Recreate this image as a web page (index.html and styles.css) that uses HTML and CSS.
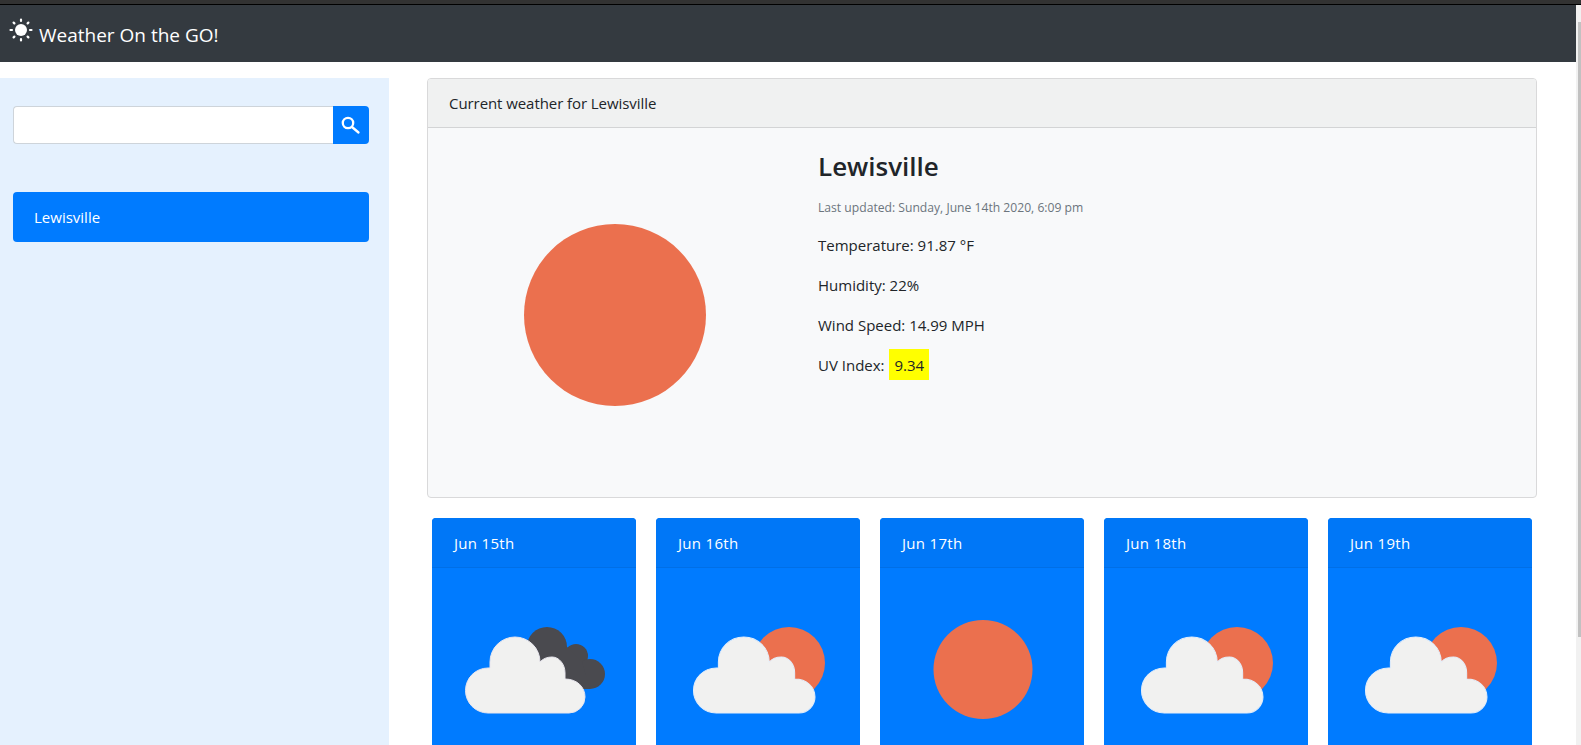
FILE: index.html
```html
<!DOCTYPE html>
<html lang="en">
<head>
<meta charset="utf-8">
<title>Weather On the GO!</title>
<link rel="stylesheet" href="styles.css">
</head>
<body>
<svg class="defs" width="0" height="0" aria-hidden="true">
  <defs>
    <path id="cloud" d="M56 146A22.500 22.500 0 0 1 56 101L58 101L58 95A25 25 0 0 1 108 95C111 91.500 115.500 90 120 90C127 90 133 97 133 106L133 112C145 112 153 120 153 130A16 16 0 0 1 137 146Z"/>
  </defs>
</svg>
<div class="app">
  <div class="strip"></div>
  <div class="window">
    <div class="page">
      <nav class="navbar">
        <svg class="brand-icon" viewBox="0 0 24 24" width="24" height="24">
          <circle cx="12" cy="12" r="6" fill="#fff"/>
          <g stroke="#fff" stroke-width="2.200" stroke-linecap="round">
            <path d="M12 1.500V3M12 21V22.500M1.500 12H3M21 12H22.500M4.600 4.600L5.400 5.400M18.600 18.600L19.400 19.400M4.600 19.400L5.400 18.600M18.600 5.400L19.400 4.600"/>
          </g>
        </svg>
        <span class="brand-text">Weather On the GO!</span>
      </nav>
      <div class="layout">
        <aside class="sidebar">
          <form class="search">
            <input class="search-input" type="text" aria-label="City">
            <button class="search-btn" type="button" aria-label="Search">
              <svg viewBox="0 0 20 20" width="20" height="20" fill="none" stroke="#fff" stroke-width="2.300">
                <circle cx="7" cy="8" r="5.200"/>
                <path d="M11 12L17.500 17.500" stroke-linecap="round"/>
              </svg>
            </button>
          </form>
          <div class="city">Lewisville</div>
        </aside>
        <main class="content">
          <section class="current">
            <header class="current-head">Current weather for Lewisville</header>
            <div class="current-body">
              <div class="current-image">
                <svg class="big-sun" viewBox="0 0 184 184" width="184" height="184">
                  <circle cx="92" cy="92" r="91" fill="#eb704e"/>
                </svg>
              </div>
              <div class="current-info">
                <h3 class="city-name">Lewisville</h3>
                <p class="updated">Last updated: Sunday, June 14th 2020, 6:09 pm</p>
                <p class="stat">Temperature: 91.87 °F</p>
                <p class="stat">Humidity: 22%</p>
                <p class="stat">Wind Speed: 14.99 MPH</p>
                <p class="stat">UV Index: <span class="uv">9.34</span></p>
              </div>
            </div>
          </section>
          <section class="forecast">
            <article class="day">
              <header class="day-head">Jun 15th</header>
              <svg class="day-icon" viewBox="0 1 204 178" width="204" height="178">
                <g fill="#4a4a4f">
                  <circle cx="115" cy="80" r="20"/>
                  <circle cx="144" cy="89" r="12"/>
                  <circle cx="158" cy="107" r="15"/>
                  <path d="M110 90L130 75L150 95L158 122L120 122Z"/>
                </g>
                <use href="#cloud" fill="#f1f1f0" stroke="#e8e6ee" stroke-width="1"/>
              </svg>
            </article>
            <article class="day">
              <header class="day-head">Jun 16th</header>
              <svg class="day-icon" viewBox="0 1 204 178" width="204" height="178">
                <circle cx="133" cy="96" r="36" fill="#eb704e"/>
                <use href="#cloud" class="cloud-shift" fill="#f1f1f0" stroke="#e4eefa" stroke-width="1"/>
              </svg>
            </article>
            <article class="day">
              <header class="day-head">Jun 17th</header>
              <svg class="day-icon" viewBox="0 1 204 178" width="204" height="178">
                <circle cx="103" cy="102.500" r="49.500" fill="#eb704e"/>
              </svg>
            </article>
            <article class="day">
              <header class="day-head">Jun 18th</header>
              <svg class="day-icon" viewBox="0 1 204 178" width="204" height="178">
                <circle cx="133" cy="96" r="36" fill="#eb704e"/>
                <use href="#cloud" class="cloud-shift" fill="#f1f1f0" stroke="#e4eefa" stroke-width="1"/>
              </svg>
            </article>
            <article class="day">
              <header class="day-head">Jun 19th</header>
              <svg class="day-icon" viewBox="0 1 204 178" width="204" height="178">
                <circle cx="133" cy="96" r="36" fill="#eb704e"/>
                <use href="#cloud" class="cloud-shift" fill="#f1f1f0" stroke="#e4eefa" stroke-width="1"/>
              </svg>
            </article>
          </section>
        </main>
      </div>
    </div>
    <div class="scrollbar"><div class="thumb"></div></div>
  </div>
</div>
</body>
</html>
```
FILE: styles.css
```css
html, body {
  margin: 0;
  height: 100%;
  overflow: hidden;
  background: #fff;
}

body {
  font-family: "Open Sans", "Noto Sans", sans-serif;
  font-size: 15px;
  line-height: 24px;
  color: #212529;
}

.defs {
  position: absolute;
}

.app {
  display: flex;
  flex-direction: column;
  height: 745px;
  overflow: hidden;
}

.strip {
  flex: none;
  height: 4px;
  background: #323232;
  border-bottom: 1px solid #000;
}

.window {
  flex: 1;
  display: flex;
  min-height: 0;
}

.page {
  flex: 1;
  min-width: 0;
  overflow: hidden;
}

.scrollbar {
  flex: none;
  width: 5px;
  box-sizing: border-box;
  padding: 17px 0 0 2px;
  background: #f1f1f1;
}

.thumb {
  height: 615px;
  background: #c1c1c1;
}

.navbar {
  display: flex;
  align-items: flex-start;
  height: 57px;
  padding-left: 9px;
  background: #343a40;
  color: #fff;
}

.brand-icon {
  margin-top: 13px;
}

.brand-text {
  margin: 15px 0 0 6px;
  font-size: 19px;
  line-height: 30px;
}

.layout {
  display: grid;
  grid-template-columns: 389px 1fr;
  margin-top: 16px;
}

.sidebar {
  height: 667px;
  padding: 28px 20px 0 13px;
  box-sizing: border-box;
  background: #e5f1fe;
}

.search {
  display: flex;
  height: 38px;
}

.search-input {
  flex: 1;
  min-width: 0;
  box-sizing: border-box;
  border: 1px solid #ced4da;
  border-right: 0;
  border-radius: 4px 0 0 4px;
  background: #fff;
  padding: 0;
}

.search-btn {
  flex: none;
  display: flex;
  align-items: center;
  justify-content: center;
  width: 36px;
  padding: 0;
  border: 0;
  border-radius: 0 4px 4px 0;
  background: #007bff;
}

.city {
  height: 50px;
  margin-top: 48px;
  padding: 13px 21px;
  box-sizing: border-box;
  border-radius: 4px;
  background: #007bff;
  color: #fff;
}

.content {
  padding: 0 39px 0 38px;
}

.current {
  box-sizing: border-box;
  height: 420px;
  border: 1px solid #d9d9da;
  border-radius: 4px;
  background: #f8f9fa;
  overflow: hidden;
}

.current-head {
  height: 49px;
  padding: 12px 21px;
  box-sizing: border-box;
  border-bottom: 1px solid #d3d4d5;
  background: #f0f1f1;
  letter-spacing: -0.07px;
}

.current-body {
  display: grid;
  grid-template-columns: 334px 1fr;
  column-gap: 36px;
  padding: 18px 20px 20px;
}

.current-image {
  display: flex;
  justify-content: center;
  padding-top: 77px;
}

.big-sun {
  filter: blur(0.7px);
}

.city-name {
  margin: 0;
  font-size: 26px;
  font-weight: 600;
  line-height: 40px;
}

.updated {
  margin: 12px 0 0;
  font-size: 12.150px;
  line-height: 20px;
  color: #6c757d;
}

.stat {
  margin: 16px 0 0;
}

.updated + .stat {
  margin-top: 15px;
}

.uv {
  display: inline-block;
  padding: 5px 5px 3px;
  margin: -5px 0 -3px 1px;
  line-height: 23px;
  background: #ff0;
}

.forecast {
  display: grid;
  grid-template-columns: repeat(5, 204px);
  column-gap: 20px;
  margin: 20px 5px 0;
}

.day {
  height: 260px;
  border-radius: 4px;
  background: #007bff;
  color: #fff;
  overflow: hidden;
}

.day-head {
  height: 50px;
  padding: 13px 22px;
  box-sizing: border-box;
  border-bottom: 1px solid #006fe6;
  background: #0077f7;
  letter-spacing: 0.3px;
}

.day-icon {
  display: block;
  filter: blur(0.4px);
}

.cloud-shift {
  transform: translate(3.400px, 0) scaleX(1.017);
}
```
